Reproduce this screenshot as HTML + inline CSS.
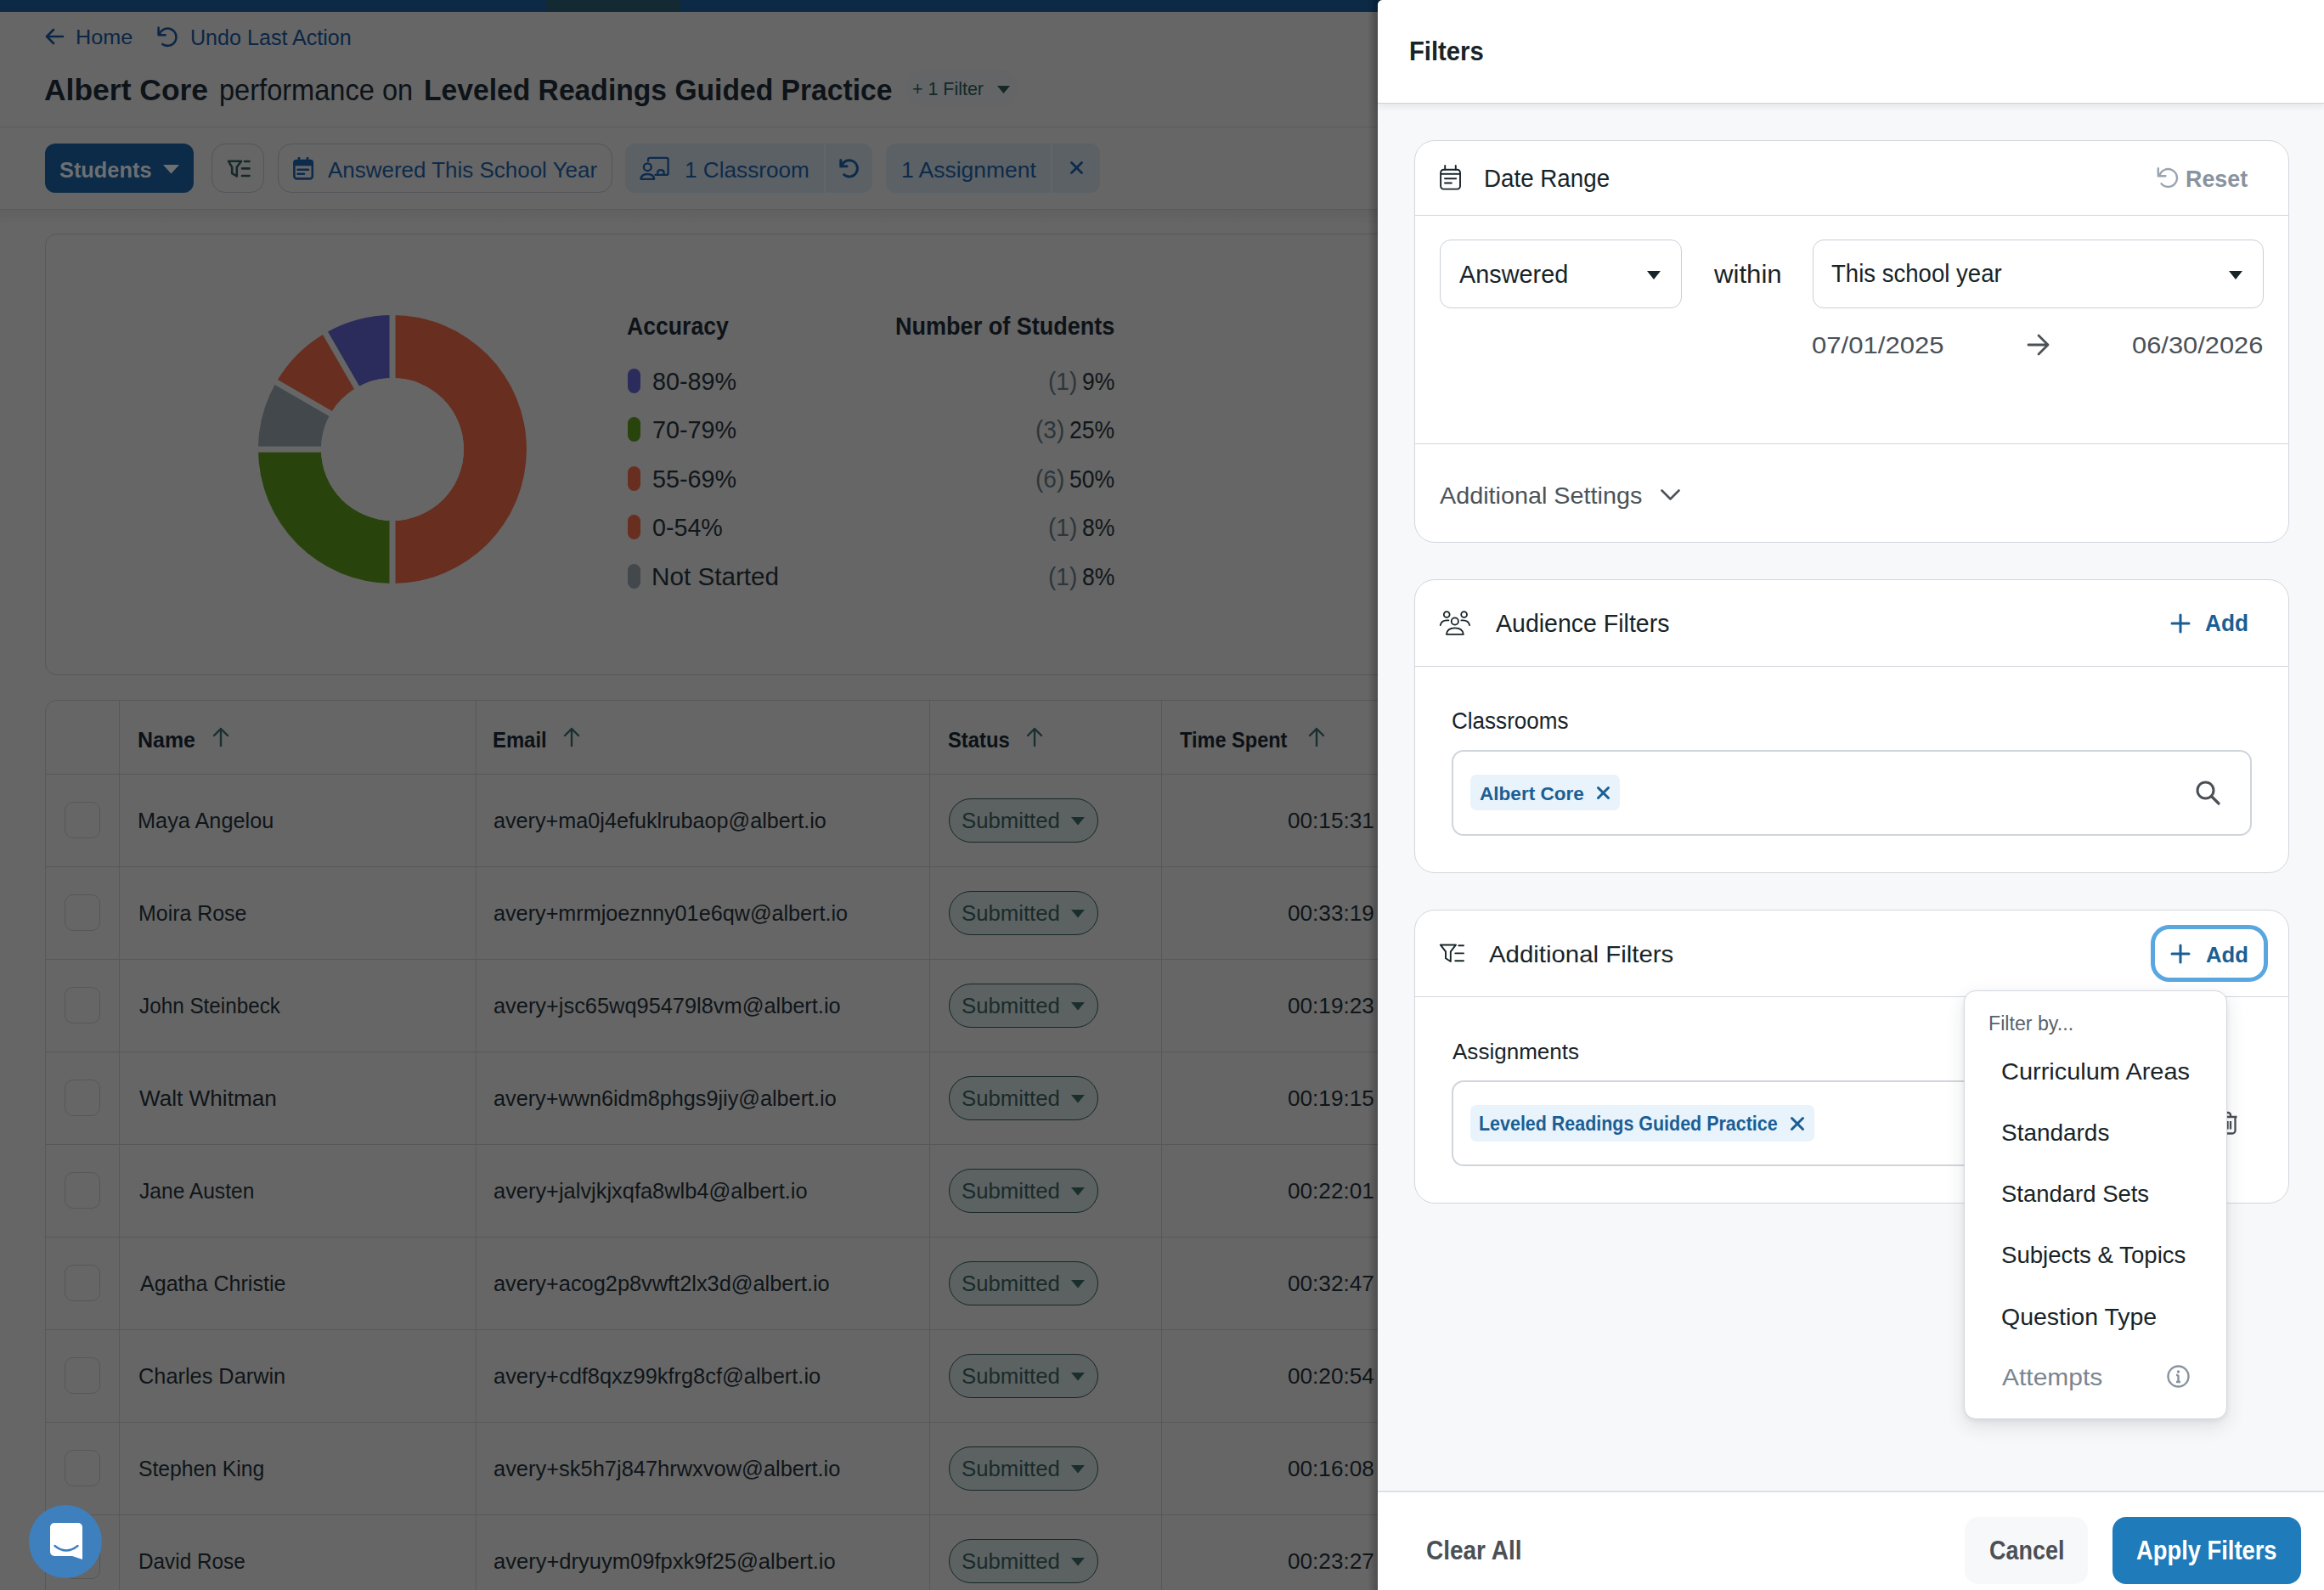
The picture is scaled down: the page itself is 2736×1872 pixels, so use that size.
<!DOCTYPE html>
<html><head><meta charset="utf-8"><style>
html,body{margin:0;padding:0;}
body{width:2736px;height:1872px;overflow:hidden;position:relative;background:#666666;font-family:"Liberation Sans",sans-serif;}
.t{position:absolute;line-height:0;white-space:nowrap;transform-origin:0 0;}
</style></head><body>
<div style="position:absolute;left:0px;top:0px;width:1640px;height:14px;background:#0c2a46"></div>
<div style="position:absolute;left:643px;top:0px;width:158px;height:14px;background:#132a33"></div>
<div style="position:absolute;left:0px;top:149px;width:1640px;height:1px;background:#5c5c5c"></div>
<div style="position:absolute;left:0px;top:246px;width:1640px;height:1px;background:#5a5a5a"></div>
<div style="position:absolute;left:0px;top:247px;width:1640px;height:17px;background:linear-gradient(#606060,#666666)"></div>
<svg style="position:absolute;left:53px;top:33px;overflow:visible" width="22" height="20" viewBox="0 0 22 20"><path d="M21 10H2M10 2L2 10L10 18" stroke="#0c2645" stroke-width="2.6" fill="none" stroke-linecap="round" stroke-linejoin="round"/></svg>
<div class="t" style="left:89.18px;top:44.19px;font-size:24.84px;font-weight:400;color:#0c2645;transform:scaleX(1.0158);">Home</div>
<svg style="position:absolute;left:184px;top:31px;overflow:visible" width="26" height="26" viewBox="0 0 26 26"><path d="M2.6 1.6V10.3H10.6" stroke="#0c2645" stroke-width="2.5" fill="none" stroke-linecap="round" stroke-linejoin="round"/><path d="M3.6 9.5A10.2 10.2 0 1 1 7.3 20.9" stroke="#0c2645" stroke-width="2.5" fill="none" stroke-linecap="round"/></svg>
<div class="t" style="left:224.02px;top:44.25px;font-size:25.26px;font-weight:400;color:#0c2645;transform:scaleX(0.9939);">Undo Last Action</div>
<div class="t" style="left:52.11px;top:105.67px;font-size:35.59px;font-weight:700;color:#0d1318;transform:scaleX(0.9966);">Albert Core</div>
<div class="t" style="left:257.88px;top:105.67px;font-size:35.59px;font-weight:400;color:#0d1318;transform:scaleX(0.9155);">performance on</div>
<div class="t" style="left:498.51px;top:105.67px;font-size:35.59px;font-weight:700;color:#0d1318;transform:scaleX(0.9455);">Leveled Readings Guided Practice</div>
<div style="position:absolute;left:1066px;top:82px;width:132px;height:44px;background:#646566;border-radius:22px"></div>
<div class="t" style="left:1074.43px;top:105.26px;font-size:22.33px;font-weight:400;color:#142828;transform:scaleX(0.9596);">+ 1 Filter</div>
<svg style="position:absolute;left:1174px;top:101px;overflow:visible" width="15" height="10" viewBox="0 0 15 10"><path d="M0 0H15L7.5 9Z" fill="#142828"/></svg>
<div style="position:absolute;left:53px;top:169px;width:175px;height:58px;background:#0c2b48;border-radius:12px"></div>
<div class="t" style="left:70.24px;top:199.51px;font-size:26.52px;font-weight:700;color:#6d6f72;transform:scaleX(0.9569);">Students</div>
<svg style="position:absolute;left:192px;top:194px;overflow:visible" width="19" height="11" viewBox="0 0 19 11"><path d="M0 0H19L9.5 10.5Z" fill="#6d6f72"/></svg>
<div style="position:absolute;left:249px;top:169px;width:62px;height:58px;box-sizing:border-box;border:1px solid #535558;border-radius:16px"></div>
<svg style="position:absolute;left:267px;top:188px;overflow:visible" width="28" height="21" viewBox="0 0 28 21"><path d="M2 1.8H17L11.8 8.8V19.5L6.2 16.2V8.8Z" stroke="#17282a" stroke-width="2.6" fill="none" stroke-linejoin="round"/><path d="M21 2H26.5M18 10.4H26.5M18 19H26.5" stroke="#17282a" stroke-width="2.6" stroke-linecap="round"/></svg>
<div style="position:absolute;left:327px;top:169px;width:394px;height:58px;box-sizing:border-box;border:1px solid #535558;border-radius:16px"></div>
<svg style="position:absolute;left:344px;top:185px;overflow:visible" width="26" height="28" viewBox="0 0 26 28"><rect x="2.4" y="4" width="21.4" height="21.4" rx="3" stroke="#0d2b4a" stroke-width="2.6" fill="none"/><rect x="1.3" y="3" width="23.6" height="7.2" rx="3" fill="#0d2b4a"/><path d="M8 0V4M18 0V4" stroke="#0d2b4a" stroke-width="2.6"/><path d="M6.5 14.7H19M6.5 19.7H14" stroke="#0d2b4a" stroke-width="2.6" stroke-linecap="round"/></svg>
<div class="t" style="left:386.00px;top:199.51px;font-size:26.52px;font-weight:400;color:#0d2b4a;transform:scaleX(0.9793);">Answered This School Year</div>
<div style="position:absolute;left:736px;top:169px;width:291px;height:58px;background:#5c6166;border-radius:12px"></div>
<div style="position:absolute;left:970px;top:169px;width:2px;height:58px;background:#60666b"></div>
<svg style="position:absolute;left:750px;top:182px;overflow:visible" width="40" height="32" viewBox="0 0 40 32"><path d="M13 7.5V5.9Q13 3.9 15 3.9H34.6Q36.6 3.9 36.6 5.9V21.9Q36.6 23.9 34.6 23.9H21.5" stroke="#0d2b4a" stroke-width="2.3" fill="none" stroke-linecap="round"/><circle cx="12.3" cy="14.7" r="4.4" stroke="#0d2b4a" stroke-width="2.3" fill="none"/><path d="M4.5 28.8Q5 23 12.3 23Q19.6 23 20.1 28.8Z" stroke="#0d2b4a" stroke-width="2.3" fill="none" stroke-linejoin="round"/><path d="M24.2 23.9V21Q24.2 18.2 27.9 18.2Q31.6 18.2 31.6 21V23.9" stroke="#0d2b4a" stroke-width="2.3" fill="none"/></svg>
<div class="t" style="left:805.74px;top:199.51px;font-size:26.52px;font-weight:400;color:#0d2b4a;transform:scaleX(0.9870);">1 Classroom</div>
<svg style="position:absolute;left:988px;top:186.5px;overflow:visible" width="23" height="25" viewBox="0 0 23 25"><path d="M1.8 1.5V8.8H9" stroke="#0d2b4a" stroke-width="3" fill="none" stroke-linecap="round" stroke-linejoin="miter"/><path d="M2.6 8.8A9.6 9.6 0 1 1 5.6 18.6" stroke="#0d2b4a" stroke-width="2.9" fill="none" stroke-linecap="round"/></svg>
<div style="position:absolute;left:1043px;top:169px;width:252px;height:58px;background:#5c6166;border-radius:12px"></div>
<div style="position:absolute;left:1237px;top:169px;width:2px;height:58px;background:#60666b"></div>
<div class="t" style="left:1060.61px;top:199.51px;font-size:26.52px;font-weight:400;color:#0d2b4a;transform:scaleX(0.9982);">1 Assignment</div>
<svg style="position:absolute;left:1260px;top:190px;overflow:visible" width="15" height="15" viewBox="0 0 15 15"><path d="M1.5 1.5L13.5 13.5M13.5 1.5L1.5 13.5" stroke="#0d2b4a" stroke-width="2.8" stroke-linecap="round"/></svg>
<div style="position:absolute;left:53px;top:275px;width:1700px;height:520px;box-sizing:border-box;border:1px solid #56585a;border-radius:14px"></div>
<svg style="position:absolute;left:0;top:0" width="1000" height="900"><path d="M462.00 371.00A158 158 0 0 1 462.00 687.00L462.00 613.00A84 84 0 0 0 462.00 445.00Z" fill="#682e1f"/><path d="M462.00 687.00A158 158 0 0 1 304.00 529.00L378.00 529.00A84 84 0 0 0 462.00 613.00Z" fill="#28440c"/><path d="M304.00 529.00A158 158 0 0 1 325.17 450.00L389.25 487.00A84 84 0 0 0 378.00 529.00Z" fill="#42484c"/><path d="M325.17 450.00A158 158 0 0 1 383.00 392.17L420.00 456.25A84 84 0 0 0 389.25 487.00Z" fill="#682e1f"/><path d="M383.00 392.17A158 158 0 0 1 462.00 371.00L462.00 445.00A84 84 0 0 0 420.00 456.25Z" fill="#2b2b5c"/><line x1="462" y1="529" x2="462.00" y2="367.00" stroke="#666666" stroke-width="7"/><line x1="462" y1="529" x2="462.00" y2="691.00" stroke="#666666" stroke-width="7"/><line x1="462" y1="529" x2="300.00" y2="529.00" stroke="#666666" stroke-width="7"/><line x1="462" y1="529" x2="321.70" y2="448.00" stroke="#666666" stroke-width="7"/><line x1="462" y1="529" x2="381.00" y2="388.70" stroke="#666666" stroke-width="7"/><circle cx="462" cy="529" r="84" fill="#666666"/></svg>
<div class="t" style="left:738.33px;top:383.84px;font-size:29.31px;font-weight:700;color:#0d1318;transform:scaleX(0.9083);">Accuracy</div>
<div class="t" style="left:1053.64px;top:383.84px;font-size:29.31px;font-weight:700;color:#0d1318;transform:scaleX(0.9228);">Number of Students</div>
<div style="position:absolute;left:739px;top:433.5px;width:15px;height:29px;background:#2b2b5c;border-radius:8px"></div>
<div class="t" style="left:767.70px;top:448.84px;font-size:29.31px;font-weight:400;color:#10161a;transform:scaleX(0.9821);">80-89%</div>
<div class="t" style="left:1273.50px;top:448.84px;font-size:29.31px;font-weight:400;color:#10161a;transform:scaleX(0.9073);">9%</div>
<div class="t" style="left:1233.82px;top:448.84px;font-size:29.31px;font-weight:400;color:#2c363b;transform:scaleX(0.9553);">(1)</div>
<div style="position:absolute;left:739px;top:491.0px;width:15px;height:29px;background:#28440c;border-radius:8px"></div>
<div class="t" style="left:767.56px;top:506.34px;font-size:29.31px;font-weight:400;color:#10161a;transform:scaleX(0.9821);">70-79%</div>
<div class="t" style="left:1258.74px;top:506.34px;font-size:29.31px;font-weight:400;color:#10161a;transform:scaleX(0.9073);">25%</div>
<div class="t" style="left:1219.19px;top:506.34px;font-size:29.31px;font-weight:400;color:#2c363b;transform:scaleX(0.9553);">(3)</div>
<div style="position:absolute;left:739px;top:548.5px;width:15px;height:29px;background:#682e1f;border-radius:8px"></div>
<div class="t" style="left:767.85px;top:563.84px;font-size:29.31px;font-weight:400;color:#10161a;transform:scaleX(0.9821);">55-69%</div>
<div class="t" style="left:1258.74px;top:563.84px;font-size:29.31px;font-weight:400;color:#10161a;transform:scaleX(0.9073);">50%</div>
<div class="t" style="left:1218.93px;top:563.84px;font-size:29.31px;font-weight:400;color:#2c363b;transform:scaleX(0.9553);">(6)</div>
<div style="position:absolute;left:739px;top:606.0px;width:15px;height:29px;background:#682e1f;border-radius:8px"></div>
<div class="t" style="left:767.85px;top:621.34px;font-size:29.31px;font-weight:400;color:#10161a;transform:scaleX(0.9781);">0-54%</div>
<div class="t" style="left:1273.50px;top:621.34px;font-size:29.31px;font-weight:400;color:#10161a;transform:scaleX(0.9073);">8%</div>
<div class="t" style="left:1233.82px;top:621.34px;font-size:29.31px;font-weight:400;color:#2c363b;transform:scaleX(0.9553);">(1)</div>
<div style="position:absolute;left:739px;top:663.5px;width:15px;height:29px;background:#42484c;border-radius:8px"></div>
<div class="t" style="left:766.62px;top:678.84px;font-size:29.31px;font-weight:400;color:#10161a;transform:scaleX(1.0131);">Not Started</div>
<div class="t" style="left:1273.50px;top:678.84px;font-size:29.31px;font-weight:400;color:#10161a;transform:scaleX(0.9073);">8%</div>
<div class="t" style="left:1233.82px;top:678.84px;font-size:29.31px;font-weight:400;color:#2c363b;transform:scaleX(0.9553);">(1)</div>
<div style="position:absolute;left:53px;top:824px;width:1700px;height:1200px;box-sizing:border-box;border:1px solid #56585a;border-radius:14px"></div>
<div style="position:absolute;left:54px;top:911px;width:1600px;height:1px;background:#56585a"></div>
<div style="position:absolute;left:54px;top:1020px;width:1600px;height:1px;background:#56585a"></div>
<div style="position:absolute;left:54px;top:1129px;width:1600px;height:1px;background:#56585a"></div>
<div style="position:absolute;left:54px;top:1238px;width:1600px;height:1px;background:#56585a"></div>
<div style="position:absolute;left:54px;top:1347px;width:1600px;height:1px;background:#56585a"></div>
<div style="position:absolute;left:54px;top:1456px;width:1600px;height:1px;background:#56585a"></div>
<div style="position:absolute;left:54px;top:1565px;width:1600px;height:1px;background:#56585a"></div>
<div style="position:absolute;left:54px;top:1674px;width:1600px;height:1px;background:#56585a"></div>
<div style="position:absolute;left:54px;top:1783px;width:1600px;height:1px;background:#56585a"></div>
<div style="position:absolute;left:140px;top:825px;width:1px;height:1100px;background:#56585a"></div>
<div style="position:absolute;left:560px;top:825px;width:1px;height:1100px;background:#56585a"></div>
<div style="position:absolute;left:1094px;top:825px;width:1px;height:1100px;background:#56585a"></div>
<div style="position:absolute;left:1367px;top:825px;width:1px;height:1100px;background:#56585a"></div>
<div class="t" style="left:162.38px;top:871.30px;font-size:25.12px;font-weight:700;color:#0b1116;transform:scaleX(0.9932);">Name</div>
<svg style="position:absolute;left:250px;top:856px;overflow:visible" width="20" height="23" viewBox="0 0 20 23"><path d="M10 22V2M2 10L10 2L18 10" stroke="#1a2f2f" stroke-width="2.4" fill="none" stroke-linecap="round" stroke-linejoin="round"/></svg>
<div class="t" style="left:580.45px;top:871.30px;font-size:25.12px;font-weight:700;color:#0b1116;transform:scaleX(0.9500);">Email</div>
<svg style="position:absolute;left:662.6px;top:856px;overflow:visible" width="20" height="23" viewBox="0 0 20 23"><path d="M10 22V2M2 10L10 2L18 10" stroke="#1a2f2f" stroke-width="2.4" fill="none" stroke-linecap="round" stroke-linejoin="round"/></svg>
<div class="t" style="left:1116.29px;top:871.30px;font-size:25.12px;font-weight:700;color:#0b1116;transform:scaleX(0.9468);">Status</div>
<svg style="position:absolute;left:1208px;top:856px;overflow:visible" width="20" height="23" viewBox="0 0 20 23"><path d="M10 22V2M2 10L10 2L18 10" stroke="#1a2f2f" stroke-width="2.4" fill="none" stroke-linecap="round" stroke-linejoin="round"/></svg>
<div class="t" style="left:1388.76px;top:871.30px;font-size:25.12px;font-weight:700;color:#0b1116;transform:scaleX(0.9375);">Time Spent</div>
<svg style="position:absolute;left:1540px;top:856px;overflow:visible" width="20" height="23" viewBox="0 0 20 23"><path d="M10 22V2M2 10L10 2L18 10" stroke="#1a2f2f" stroke-width="2.4" fill="none" stroke-linecap="round" stroke-linejoin="round"/></svg>
<div style="position:absolute;left:76px;top:944.0px;width:42px;height:43px;box-sizing:border-box;border:1px solid #55575a;border-radius:10px"></div>
<div class="t" style="left:162.48px;top:966.05px;font-size:25.82px;font-weight:400;color:#0f1519;transform:scaleX(0.9798);">Maya Angelou</div>
<div class="t" style="left:581.19px;top:966.05px;font-size:25.82px;font-weight:400;color:#0f1519;transform:scaleX(0.9759);">avery+ma0j4efuklrubaop@albert.io</div>
<div class="t" style="left:1515.95px;top:966.05px;font-size:25.82px;font-weight:400;color:#0f1519;transform:scaleX(1.0128);">00:15:31</div>
<div style="position:absolute;left:1117px;top:939.5px;width:176px;height:52px;box-sizing:border-box;border:1px solid #172727;border-radius:26px;background:#5c6262"></div>
<div class="t" style="left:1131.84px;top:966.05px;font-size:25.82px;font-weight:400;color:#1a2b2b;transform:scaleX(0.9969);">Submitted</div>
<svg style="position:absolute;left:1261px;top:962.0px;overflow:visible" width="16" height="10" viewBox="0 0 16 10"><path d="M0 0H16L8 9.5Z" fill="#1b2e2e"/></svg>
<div style="position:absolute;left:76px;top:1053.0px;width:42px;height:43px;box-sizing:border-box;border:1px solid #55575a;border-radius:10px"></div>
<div class="t" style="left:162.51px;top:1075.05px;font-size:25.82px;font-weight:400;color:#0f1519;transform:scaleX(0.9657);">Moira Rose</div>
<div class="t" style="left:581.19px;top:1075.05px;font-size:25.82px;font-weight:400;color:#0f1519;transform:scaleX(0.9764);">avery+mrmjoeznny01e6qw@albert.io</div>
<div class="t" style="left:1515.95px;top:1075.05px;font-size:25.82px;font-weight:400;color:#0f1519;transform:scaleX(1.0128);">00:33:19</div>
<div style="position:absolute;left:1117px;top:1048.5px;width:176px;height:52px;box-sizing:border-box;border:1px solid #172727;border-radius:26px;background:#5c6262"></div>
<div class="t" style="left:1131.84px;top:1075.05px;font-size:25.82px;font-weight:400;color:#1a2b2b;transform:scaleX(0.9969);">Submitted</div>
<svg style="position:absolute;left:1261px;top:1071.0px;overflow:visible" width="16" height="10" viewBox="0 0 16 10"><path d="M0 0H16L8 9.5Z" fill="#1b2e2e"/></svg>
<div style="position:absolute;left:76px;top:1162.0px;width:42px;height:43px;box-sizing:border-box;border:1px solid #55575a;border-radius:10px"></div>
<div class="t" style="left:164.14px;top:1184.05px;font-size:25.82px;font-weight:400;color:#0f1519;transform:scaleX(0.9403);">John Steinbeck</div>
<div class="t" style="left:581.18px;top:1184.05px;font-size:25.82px;font-weight:400;color:#0f1519;transform:scaleX(0.9829);">avery+jsc65wq95479l8vm@albert.io</div>
<div class="t" style="left:1515.82px;top:1184.05px;font-size:25.82px;font-weight:400;color:#0f1519;transform:scaleX(1.0128);">00:19:23</div>
<div style="position:absolute;left:1117px;top:1157.5px;width:176px;height:52px;box-sizing:border-box;border:1px solid #172727;border-radius:26px;background:#5c6262"></div>
<div class="t" style="left:1131.84px;top:1184.05px;font-size:25.82px;font-weight:400;color:#1a2b2b;transform:scaleX(0.9969);">Submitted</div>
<svg style="position:absolute;left:1261px;top:1180.0px;overflow:visible" width="16" height="10" viewBox="0 0 16 10"><path d="M0 0H16L8 9.5Z" fill="#1b2e2e"/></svg>
<div style="position:absolute;left:76px;top:1271.0px;width:42px;height:43px;box-sizing:border-box;border:1px solid #55575a;border-radius:10px"></div>
<div class="t" style="left:164.37px;top:1293.05px;font-size:25.82px;font-weight:400;color:#0f1519;transform:scaleX(1.0134);">Walt Whitman</div>
<div class="t" style="left:581.19px;top:1293.05px;font-size:25.82px;font-weight:400;color:#0f1519;transform:scaleX(0.9778);">avery+wwn6idm8phgs9jiy@albert.io</div>
<div class="t" style="left:1515.82px;top:1293.05px;font-size:25.82px;font-weight:400;color:#0f1519;transform:scaleX(1.0128);">00:19:15</div>
<div style="position:absolute;left:1117px;top:1266.5px;width:176px;height:52px;box-sizing:border-box;border:1px solid #172727;border-radius:26px;background:#5c6262"></div>
<div class="t" style="left:1131.84px;top:1293.05px;font-size:25.82px;font-weight:400;color:#1a2b2b;transform:scaleX(0.9969);">Submitted</div>
<svg style="position:absolute;left:1261px;top:1289.0px;overflow:visible" width="16" height="10" viewBox="0 0 16 10"><path d="M0 0H16L8 9.5Z" fill="#1b2e2e"/></svg>
<div style="position:absolute;left:76px;top:1380.0px;width:42px;height:43px;box-sizing:border-box;border:1px solid #55575a;border-radius:10px"></div>
<div class="t" style="left:164.13px;top:1402.05px;font-size:25.82px;font-weight:400;color:#0f1519;transform:scaleX(0.9524);">Jane Austen</div>
<div class="t" style="left:581.18px;top:1402.05px;font-size:25.82px;font-weight:400;color:#0f1519;transform:scaleX(0.9842);">avery+jalvjkjxqfa8wlb4@albert.io</div>
<div class="t" style="left:1515.95px;top:1402.05px;font-size:25.82px;font-weight:400;color:#0f1519;transform:scaleX(1.0128);">00:22:01</div>
<div style="position:absolute;left:1117px;top:1375.5px;width:176px;height:52px;box-sizing:border-box;border:1px solid #172727;border-radius:26px;background:#5c6262"></div>
<div class="t" style="left:1131.84px;top:1402.05px;font-size:25.82px;font-weight:400;color:#1a2b2b;transform:scaleX(0.9969);">Submitted</div>
<svg style="position:absolute;left:1261px;top:1398.0px;overflow:visible" width="16" height="10" viewBox="0 0 16 10"><path d="M0 0H16L8 9.5Z" fill="#1b2e2e"/></svg>
<div style="position:absolute;left:76px;top:1489.0px;width:42px;height:43px;box-sizing:border-box;border:1px solid #55575a;border-radius:10px"></div>
<div class="t" style="left:164.50px;top:1511.05px;font-size:25.82px;font-weight:400;color:#0f1519;transform:scaleX(0.9714);">Agatha Christie</div>
<div class="t" style="left:581.19px;top:1511.05px;font-size:25.82px;font-weight:400;color:#0f1519;transform:scaleX(0.9822);">avery+acog2p8vwft2lx3d@albert.io</div>
<div class="t" style="left:1516.08px;top:1511.05px;font-size:25.82px;font-weight:400;color:#0f1519;transform:scaleX(1.0128);">00:32:47</div>
<div style="position:absolute;left:1117px;top:1484.5px;width:176px;height:52px;box-sizing:border-box;border:1px solid #172727;border-radius:26px;background:#5c6262"></div>
<div class="t" style="left:1131.84px;top:1511.05px;font-size:25.82px;font-weight:400;color:#1a2b2b;transform:scaleX(0.9969);">Submitted</div>
<svg style="position:absolute;left:1261px;top:1507.0px;overflow:visible" width="16" height="10" viewBox="0 0 16 10"><path d="M0 0H16L8 9.5Z" fill="#1b2e2e"/></svg>
<div style="position:absolute;left:76px;top:1598.0px;width:42px;height:43px;box-sizing:border-box;border:1px solid #55575a;border-radius:10px"></div>
<div class="t" style="left:163.23px;top:1620.05px;font-size:25.82px;font-weight:400;color:#0f1519;transform:scaleX(0.9815);">Charles Darwin</div>
<div class="t" style="left:581.18px;top:1620.05px;font-size:25.82px;font-weight:400;color:#0f1519;transform:scaleX(0.9842);">avery+cdf8qxz99kfrg8cf@albert.io</div>
<div class="t" style="left:1515.56px;top:1620.05px;font-size:25.82px;font-weight:400;color:#0f1519;transform:scaleX(1.0128);">00:20:54</div>
<div style="position:absolute;left:1117px;top:1593.5px;width:176px;height:52px;box-sizing:border-box;border:1px solid #172727;border-radius:26px;background:#5c6262"></div>
<div class="t" style="left:1131.84px;top:1620.05px;font-size:25.82px;font-weight:400;color:#1a2b2b;transform:scaleX(0.9969);">Submitted</div>
<svg style="position:absolute;left:1261px;top:1616.0px;overflow:visible" width="16" height="10" viewBox="0 0 16 10"><path d="M0 0H16L8 9.5Z" fill="#1b2e2e"/></svg>
<div style="position:absolute;left:76px;top:1707.0px;width:42px;height:43px;box-sizing:border-box;border:1px solid #55575a;border-radius:10px"></div>
<div class="t" style="left:163.39px;top:1729.05px;font-size:25.82px;font-weight:400;color:#0f1519;transform:scaleX(0.9566);">Stephen King</div>
<div class="t" style="left:581.18px;top:1729.05px;font-size:25.82px;font-weight:400;color:#0f1519;transform:scaleX(0.9858);">avery+sk5h7j847hrwxvow@albert.io</div>
<div class="t" style="left:1515.82px;top:1729.05px;font-size:25.82px;font-weight:400;color:#0f1519;transform:scaleX(1.0128);">00:16:08</div>
<div style="position:absolute;left:1117px;top:1702.5px;width:176px;height:52px;box-sizing:border-box;border:1px solid #172727;border-radius:26px;background:#5c6262"></div>
<div class="t" style="left:1131.84px;top:1729.05px;font-size:25.82px;font-weight:400;color:#1a2b2b;transform:scaleX(0.9969);">Submitted</div>
<svg style="position:absolute;left:1261px;top:1725.0px;overflow:visible" width="16" height="10" viewBox="0 0 16 10"><path d="M0 0H16L8 9.5Z" fill="#1b2e2e"/></svg>
<div style="position:absolute;left:76px;top:1816.0px;width:42px;height:43px;box-sizing:border-box;border:1px solid #55575a;border-radius:10px"></div>
<div class="t" style="left:162.55px;top:1838.05px;font-size:25.82px;font-weight:400;color:#0f1519;transform:scaleX(0.9427);">David Rose</div>
<div class="t" style="left:581.18px;top:1838.05px;font-size:25.82px;font-weight:400;color:#0f1519;transform:scaleX(0.9891);">avery+dryuym09fpxk9f25@albert.io</div>
<div class="t" style="left:1516.08px;top:1838.05px;font-size:25.82px;font-weight:400;color:#0f1519;transform:scaleX(1.0128);">00:23:27</div>
<div style="position:absolute;left:1117px;top:1811.5px;width:176px;height:52px;box-sizing:border-box;border:1px solid #172727;border-radius:26px;background:#5c6262"></div>
<div class="t" style="left:1131.84px;top:1838.05px;font-size:25.82px;font-weight:400;color:#1a2b2b;transform:scaleX(0.9969);">Submitted</div>
<svg style="position:absolute;left:1261px;top:1834.0px;overflow:visible" width="16" height="10" viewBox="0 0 16 10"><path d="M0 0H16L8 9.5Z" fill="#1b2e2e"/></svg>
<div style="position:absolute;left:1610px;top:0px;width:12px;height:1872px;background:linear-gradient(to right,rgba(0,0,0,0),rgba(0,0,0,0.25))"></div>
<div style="position:absolute;left:1622px;top:0px;width:1114px;height:1872px;background:#f7f8fa;border-top-left-radius:6px;overflow:hidden"></div>
<div style="position:absolute;left:1622px;top:0px;width:1114px;height:121px;background:#ffffff;border-top-left-radius:6px;border-bottom:1px solid #cdd3da;box-shadow:0 3px 8px rgba(40,50,70,0.10)"></div>
<div class="t" style="left:1659.30px;top:61.12px;font-size:31.12px;font-weight:700;color:#172428;transform:scaleX(0.9400);">Filters</div>
<div style="position:absolute;left:1665px;top:165px;width:1030px;height:474px;box-sizing:border-box;background:#fff;border:1px solid #d2d7dd;border-radius:24px"></div>
<div style="position:absolute;left:1666px;top:253px;width:1028px;height:1px;background:#d2d7dd"></div>
<div style="position:absolute;left:1666px;top:522px;width:1028px;height:1px;background:#d2d7dd"></div>
<svg style="position:absolute;left:1694px;top:194px;overflow:visible" width="28" height="30" viewBox="0 0 28 30"><rect x="2.1" y="5.7" width="22.9" height="22.9" rx="3.5" stroke="#172428" stroke-width="1.9" fill="none"/><path d="M7.2 1V5.7M19.8 1V5.7" stroke="#172428" stroke-width="1.9" stroke-linecap="round"/><path d="M2.1 10.8H25" stroke="#172428" stroke-width="1.9"/><path d="M7 16.2H20.2M7 21.5H14.9" stroke="#172428" stroke-width="1.9" stroke-linecap="round"/></svg>
<div class="t" style="left:1747.38px;top:210.35px;font-size:29.59px;font-weight:400;color:#172428;transform:scaleX(0.9380);">Date Range</div>
<svg style="position:absolute;left:2538px;top:196px;overflow:visible" width="28" height="28" viewBox="0 0 28 28"><path d="M2.8 2.2V11.2H11.4" stroke="#9aa4af" stroke-width="2.4" fill="none" stroke-linecap="round" stroke-linejoin="round"/><path d="M4.4 10.8A10.45 10.45 0 1 1 6.5 20.3" stroke="#9aa4af" stroke-width="2.4" fill="none" stroke-linecap="round"/></svg>
<div class="t" style="left:2573.26px;top:210.13px;font-size:28.47px;font-weight:700;color:#8893a0;transform:scaleX(0.9428);">Reset</div>
<div style="position:absolute;left:1695px;top:282px;width:285px;height:81px;box-sizing:border-box;border:1px solid #c9cfd6;border-radius:13px;background:#fff"></div>
<div class="t" style="left:1718.00px;top:323.15px;font-size:30.15px;font-weight:400;color:#172428;transform:scaleX(0.9565);">Answered</div>
<svg style="position:absolute;left:1939px;top:319px;overflow:visible" width="16" height="10" viewBox="0 0 16 10"><path d="M0 0H16L8 10Z" fill="#172428"/></svg>
<div class="t" style="left:2017.80px;top:323.21px;font-size:30.00px;font-weight:400;color:#172428;transform:scaleX(1.0388);">within</div>
<div style="position:absolute;left:2134px;top:282px;width:531px;height:81px;box-sizing:border-box;border:1px solid #c9cfd6;border-radius:13px;background:#fff"></div>
<div class="t" style="left:2156.45px;top:322.45px;font-size:30.15px;font-weight:400;color:#172428;transform:scaleX(0.9143);">This school year</div>
<svg style="position:absolute;left:2624px;top:319px;overflow:visible" width="16" height="10" viewBox="0 0 16 10"><path d="M0 0H16L8 10Z" fill="#172428"/></svg>
<div class="t" style="left:2133.36px;top:406.73px;font-size:27.91px;font-weight:400;color:#4a5157;transform:scaleX(1.1144);">07/01/2025</div>
<svg style="position:absolute;left:2387px;top:393px;overflow:visible" width="26" height="26" viewBox="0 0 26 26"><path d="M1 13H24M13 2L24 13L13 24" stroke="#4a5157" stroke-width="2.8" fill="none" stroke-linecap="round" stroke-linejoin="round"/></svg>
<div class="t" style="left:2509.77px;top:406.73px;font-size:27.91px;font-weight:400;color:#4a5157;transform:scaleX(1.1057);">06/30/2026</div>
<div class="t" style="left:1695.40px;top:582.93px;font-size:28.47px;font-weight:400;color:#4b5359;transform:scaleX(1.0107);">Additional Settings</div>
<svg style="position:absolute;left:1955px;top:576px;overflow:visible" width="23" height="13" viewBox="0 0 23 13"><path d="M1.5 1.5L11.5 11.5L21.5 1.5" stroke="#4b5359" stroke-width="2.6" fill="none" stroke-linecap="round" stroke-linejoin="round"/></svg>
<div style="position:absolute;left:1665px;top:682px;width:1030px;height:346px;box-sizing:border-box;background:#fff;border:1px solid #d2d7dd;border-radius:24px"></div>
<div style="position:absolute;left:1666px;top:784px;width:1028px;height:1px;background:#d2d7dd"></div>
<svg style="position:absolute;left:1690px;top:715px;overflow:visible" width="46" height="36" viewBox="0 0 46 36"><g stroke="#172428" stroke-width="1.8" fill="none" stroke-linecap="round" stroke-linejoin="round"><circle cx="13.2" cy="8.5" r="3.4"/><circle cx="33.6" cy="8.5" r="3.4"/><circle cx="22.8" cy="16.5" r="4.1"/><path d="M15.4 15.4H13.5Q7 15.4 5.7 21.1"/><path d="M30.4 15.4H32.3Q38.8 15.4 40.1 21.1"/><path d="M12.9 31.9Q13.6 24.4 22.8 24.4Q32 24.4 32.9 31.9Z"/></g></svg>
<div class="t" style="left:1760.50px;top:733.99px;font-size:28.61px;font-weight:400;color:#172428;transform:scaleX(0.9969);">Audience Filters</div>
<svg style="position:absolute;left:2556px;top:723px;overflow:visible" width="22" height="22" viewBox="0 0 22 22"><path d="M11 1V21M1 11H21" stroke="#1b5e94" stroke-width="3" stroke-linecap="round"/></svg>
<div class="t" style="left:2596.35px;top:734.47px;font-size:27.49px;font-weight:700;color:#1b5e94;transform:scaleX(0.9529);">Add</div>
<div class="t" style="left:1709.20px;top:848.67px;font-size:26.94px;font-weight:400;color:#172428;transform:scaleX(0.9669);">Classrooms</div>
<div style="position:absolute;left:1709px;top:883px;width:942px;height:101px;box-sizing:border-box;border:2px solid #d0d5dc;border-radius:14px;background:#fff"></div>
<div style="position:absolute;left:1731px;top:912px;width:176px;height:42px;background:#e8f3fb;border-radius:7px"></div>
<div class="t" style="left:1741.64px;top:933.77px;font-size:22.89px;font-weight:700;color:#1b5e94;transform:scaleX(0.9866);">Albert Core</div>
<svg style="position:absolute;left:1880px;top:926px;overflow:visible" width="15" height="15" viewBox="0 0 15 15"><path d="M1.5 1.5L13.5 13.5M13.5 1.5L1.5 13.5" stroke="#1b5e94" stroke-width="3" stroke-linecap="round"/></svg>
<svg style="position:absolute;left:2585px;top:919px;overflow:visible" width="29" height="29" viewBox="0 0 29 29"><circle cx="11.5" cy="11.5" r="9.5" stroke="#4a4f55" stroke-width="3" fill="none"/><path d="M18.5 18.5L27 27" stroke="#4a4f55" stroke-width="3.2" stroke-linecap="round"/></svg>
<div style="position:absolute;left:1665px;top:1071px;width:1030px;height:346px;box-sizing:border-box;background:#fff;border:1px solid #d2d7dd;border-radius:24px"></div>
<div style="position:absolute;left:1666px;top:1173px;width:1028px;height:1px;background:#d2d7dd"></div>
<svg style="position:absolute;left:1690px;top:1108px;overflow:visible" width="36" height="28" viewBox="0 0 36 28"><g stroke="#172428" stroke-width="1.9" fill="none" stroke-linecap="round" stroke-linejoin="round"><path d="M5.75 4.45H24L17.8 12.4V24L12 20.3V12.4Z"/><path d="M27.3 5.3H33M23.3 14.4H33M23.3 23.3H33"/></g></svg>
<div class="t" style="left:1753.20px;top:1122.93px;font-size:28.47px;font-weight:400;color:#172428;transform:scaleX(1.0324);">Additional Filters</div>
<div style="position:absolute;left:2532px;top:1089px;width:138px;height:67px;box-sizing:border-box;border:5px solid #5aa7df;border-radius:22px;background:#fff"></div>
<svg style="position:absolute;left:2556px;top:1112px;overflow:visible" width="22" height="22" viewBox="0 0 22 22"><path d="M11 1V21M1 11H21" stroke="#1b5e94" stroke-width="3" stroke-linecap="round"/></svg>
<div class="t" style="left:2597.36px;top:1123.76px;font-size:26.66px;font-weight:700;color:#1b5e94;transform:scaleX(0.9626);">Add</div>
<div class="t" style="left:1710.40px;top:1238.06px;font-size:26.38px;font-weight:400;color:#172428;transform:scaleX(0.9874);">Assignments</div>
<div style="position:absolute;left:1709px;top:1272px;width:880px;height:101px;box-sizing:border-box;border:2px solid #d0d5dc;border-radius:14px;background:#fff"></div>
<div style="position:absolute;left:1731px;top:1301px;width:405px;height:43px;background:#e8f3fb;border-radius:7px"></div>
<div class="t" style="left:1741.01px;top:1322.78px;font-size:23.73px;font-weight:700;color:#1b5e94;transform:scaleX(0.9042);">Leveled Readings Guided Practice</div>
<svg style="position:absolute;left:2108px;top:1315px;overflow:visible" width="16" height="16" viewBox="0 0 16 16"><path d="M1.5 1.5L14.5 14.5M14.5 1.5L1.5 14.5" stroke="#1b5e94" stroke-width="3" stroke-linecap="round"/></svg>
<svg style="position:absolute;left:2607px;top:1308px;overflow:visible" width="28" height="28" viewBox="0 0 28 28"><path d="M2 7H26.5M10 7V5A3 3 0 0 1 13 2H16A3 3 0 0 1 19 5V7M6 7V23A3.5 3.5 0 0 0 9.5 26.5H21A3.5 3.5 0 0 0 24.5 23V7M15.5 12V21.5M19 12V21.5" stroke="#4a4f55" stroke-width="2.3" fill="none"/></svg>
<div style="position:absolute;left:2312px;top:1166px;width:310px;height:505px;box-sizing:border-box;background:#fff;border:1px solid #d3d8de;border-radius:14px;box-shadow:0 8px 22px rgba(30,40,60,0.12),0 2px 5px rgba(30,40,60,0.07)"></div>
<div class="t" style="left:2341.14px;top:1204.84px;font-size:24.42px;font-weight:400;color:#59616a;transform:scaleX(0.9502);">Filter by...</div>
<div class="t" style="left:2355.55px;top:1261.13px;font-size:28.47px;font-weight:400;color:#172428;transform:scaleX(1.0169);">Curriculum Areas</div>
<div class="t" style="left:2355.74px;top:1333.13px;font-size:28.47px;font-weight:400;color:#172428;transform:scaleX(0.9815);">Standards</div>
<div class="t" style="left:2355.76px;top:1405.13px;font-size:28.47px;font-weight:400;color:#172428;transform:scaleX(0.9650);">Standard Sets</div>
<div class="t" style="left:2355.76px;top:1477.13px;font-size:28.47px;font-weight:400;color:#172428;transform:scaleX(0.9696);">Subjects &amp; Topics</div>
<div class="t" style="left:2355.72px;top:1549.53px;font-size:28.47px;font-weight:400;color:#172428;transform:scaleX(1.0005);">Question Type</div>
<div class="t" style="left:2357.00px;top:1620.93px;font-size:28.47px;font-weight:400;color:#7a8590;transform:scaleX(1.0528);">Attempts</div>
<svg style="position:absolute;left:2551px;top:1607px;overflow:visible" width="27" height="27" viewBox="0 0 27 27"><circle cx="13.5" cy="13.5" r="12" stroke="#8893a0" stroke-width="2.4" fill="none"/><path d="M13.5 12V20M11 20H16M11 12H13.5" stroke="#8893a0" stroke-width="2.4"/><circle cx="13.5" cy="8" r="1.7" fill="#8893a0"/></svg>
<div style="position:absolute;left:1622px;top:1755px;width:1114px;height:117px;background:#fff;border-top:2px solid #dde1e6"></div>
<div class="t" style="left:1678.88px;top:1826.06px;font-size:30.70px;font-weight:700;color:#4a5056;transform:scaleX(0.9121);">Clear All</div>
<div style="position:absolute;left:2313px;top:1786px;width:145px;height:79px;background:#f7f8fa;border-radius:16px"></div>
<div class="t" style="left:2341.62px;top:1826.06px;font-size:30.70px;font-weight:700;color:#4a5056;transform:scaleX(0.8784);">Cancel</div>
<div style="position:absolute;left:2487px;top:1786px;width:222px;height:79px;background:#1f7bb9;border-radius:16px"></div>
<div class="t" style="left:2515.32px;top:1826.06px;font-size:30.70px;font-weight:700;color:#ffffff;transform:scaleX(0.8906);">Apply Filters</div>
<div style="position:absolute;left:34px;top:1772px;width:86px;height:86px;background:#3e80bd;border-radius:50%"></div>
<svg style="position:absolute;left:59px;top:1793px;overflow:visible" width="38" height="43" viewBox="0 0 38 43"><path d="M5 0H33A5 5 0 0 1 38 5V43L26 39H5A5 5 0 0 1 0 34V5A5 5 0 0 1 5 0Z" fill="#fff"/><path d="M5.5 27Q19 38 32.5 27" stroke="#3e80bd" stroke-width="2.4" fill="none" stroke-linecap="round"/></svg>
</body></html>
